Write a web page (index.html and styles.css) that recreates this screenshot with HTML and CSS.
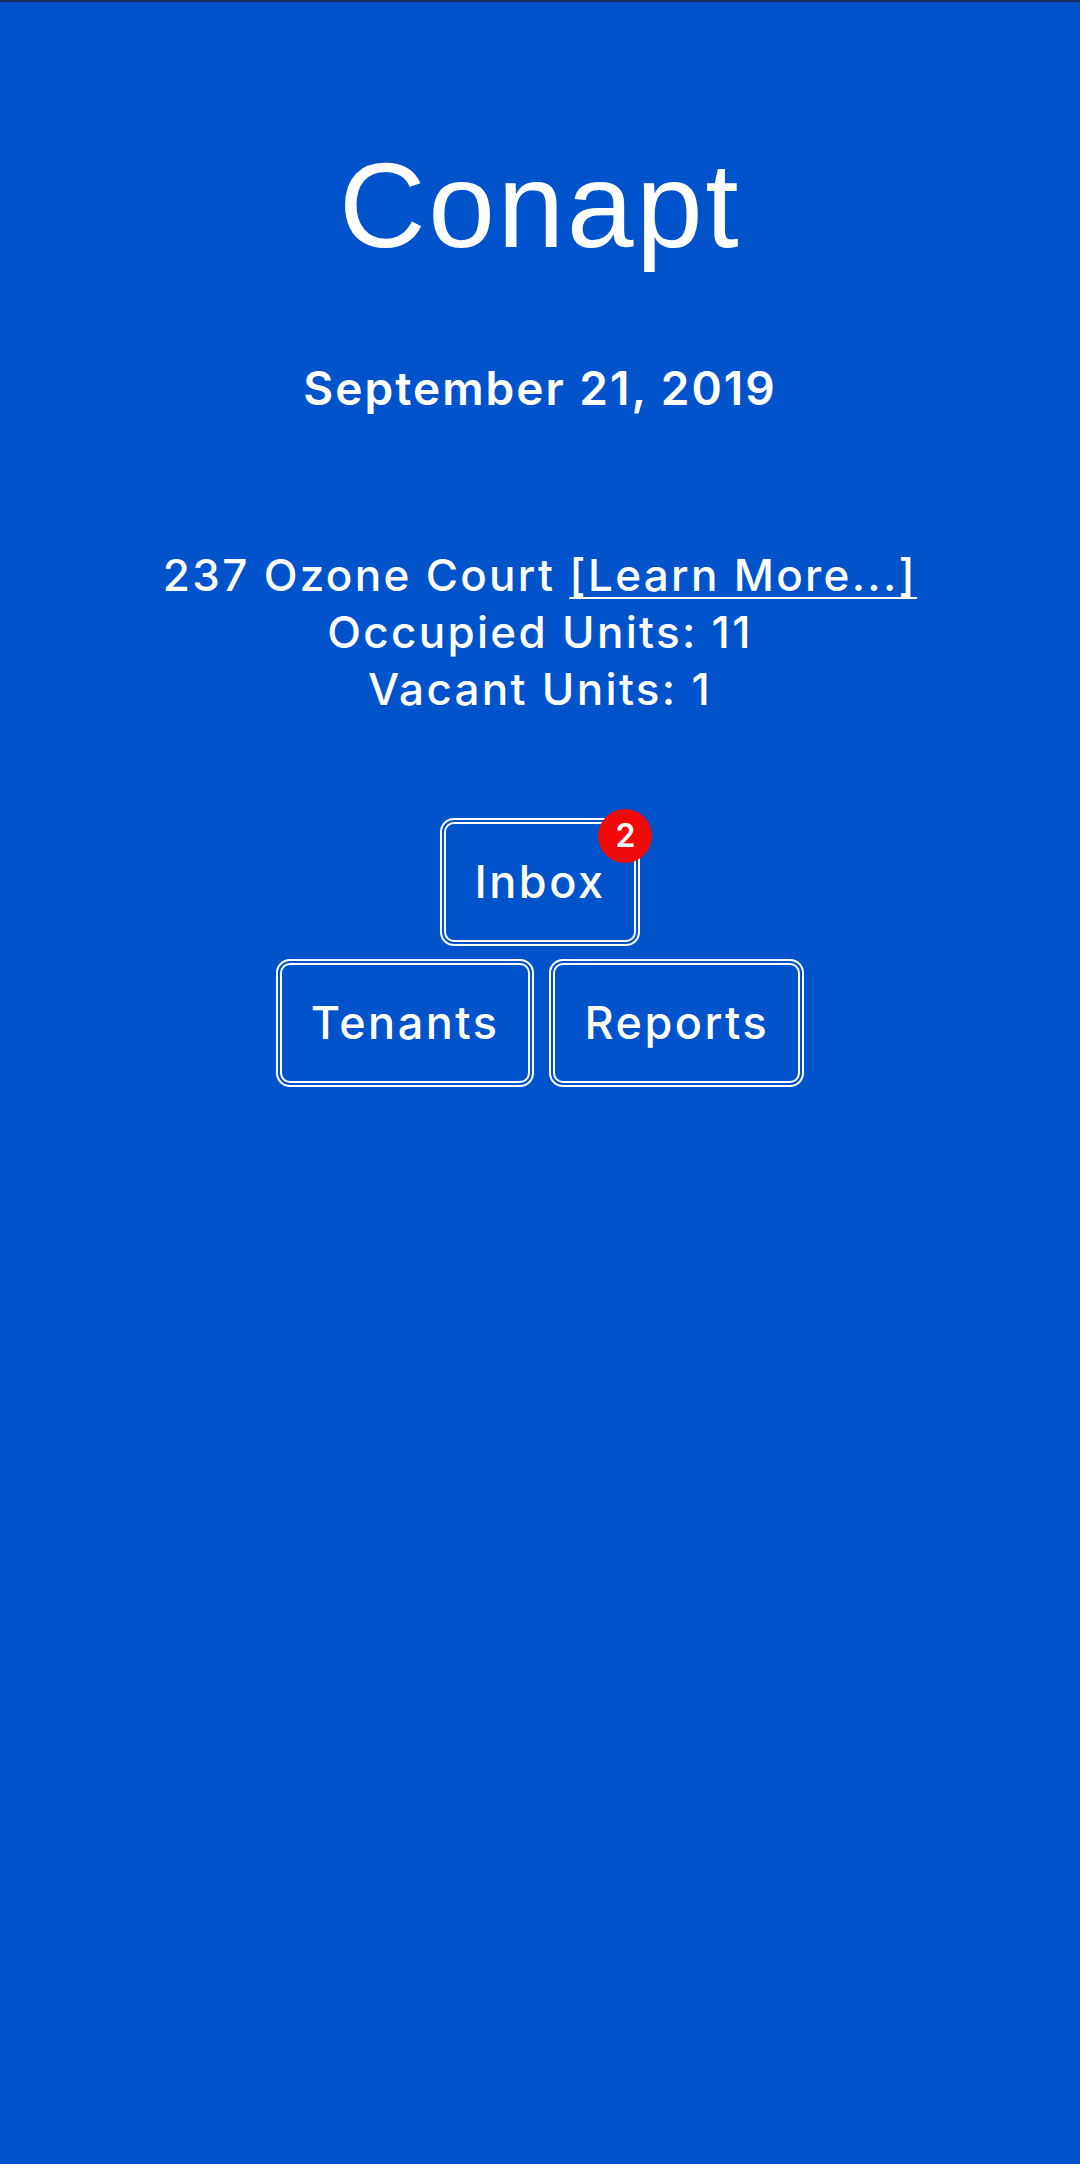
FILE: index.html
```html
<!DOCTYPE html>
<html lang="en">
<head>
    <meta charset="UTF-8">
    <meta name="viewport" content="width=device-width, initial-scale=1.0">
    <title>Conapt</title>
    <link rel="stylesheet" href="styles.css">
</head>
<body>
    <div class="status-edge"></div>
    <div class="container">
        <h1 class="title">Conapt</h1>
        <p class="date">September 21, 2019</p>

        <div class="property">
            <p>237 Ozone Court <a href="#" class="learn-more">[Learn More...]</a></p>
            <p>Occupied Units: 11</p>
            <p>Vacant Units: 1</p>
        </div>

        <div class="menu">
            <div class="menu-row">
                <button class="btn">
                    Inbox
                    <span class="badge">2</span>
                </button>
            </div>
            <div class="menu-row">
                <button class="btn">Tenants</button>
                <button class="btn">Reports</button>
            </div>
        </div>
    </div>
</body>
</html>
```

FILE: styles.css
```css
html, body {
    margin: 0;
    padding: 0;
}

body {
    font-family: Inter, "Liberation Sans", Arial, sans-serif;
    font-weight: 500;
    background-color: #0053cb;
    color: #fff;
    min-height: 2164px;
}

.status-edge {
    height: 2px;
    background-color: #1c2a66;
    border-bottom: 3px solid #0450c4;
}

.container {
    display: flex;
    flex-direction: column;
    align-items: center;
    text-align: center;
    padding-top: 140px;
}

.title {
    font-family: "Liberation Sans", Arial, sans-serif;
    font-size: 120px;
    font-weight: normal;
    line-height: 1;
    letter-spacing: 2.5px;
    margin: 0;
}

.date {
    font-size: 46px;
    font-weight: 600;
    line-height: 1;
    letter-spacing: 2px;
    margin: 100px 0 0;
}

.property {
    margin-top: 136px;
    font-size: 44px;
    line-height: 57px;
    letter-spacing: 2.3px;
}

.property p {
    margin: 0;
}

.learn-more {
    color: #fff;
    text-decoration: underline;
    text-decoration-thickness: 2px;
    text-underline-offset: 6px;
}

.menu {
    margin-top: 100px;
    display: flex;
    flex-direction: column;
    align-items: center;
    gap: 13px;
}

.menu-row {
    display: flex;
    gap: 15px;
}

.btn {
    position: relative;
    background: transparent;
    color: #fff;
    font-family: inherit;
    font-size: 45px;
    font-weight: 500;
    letter-spacing: 2.5px;
    line-height: 116px;
    height: 128px;
    padding: 0 29px;
    border: 6px double #fff;
    border-radius: 14px;
    cursor: pointer;
}

.badge {
    position: absolute;
    top: -15px;
    right: -18px;
    width: 54px;
    height: 54px;
    border-radius: 50%;
    background-color: #f10a0a;
    color: #fff;
    font-size: 32px;
    font-weight: 600;
    line-height: 54px;
    letter-spacing: 0;
    text-align: center;
}
```
